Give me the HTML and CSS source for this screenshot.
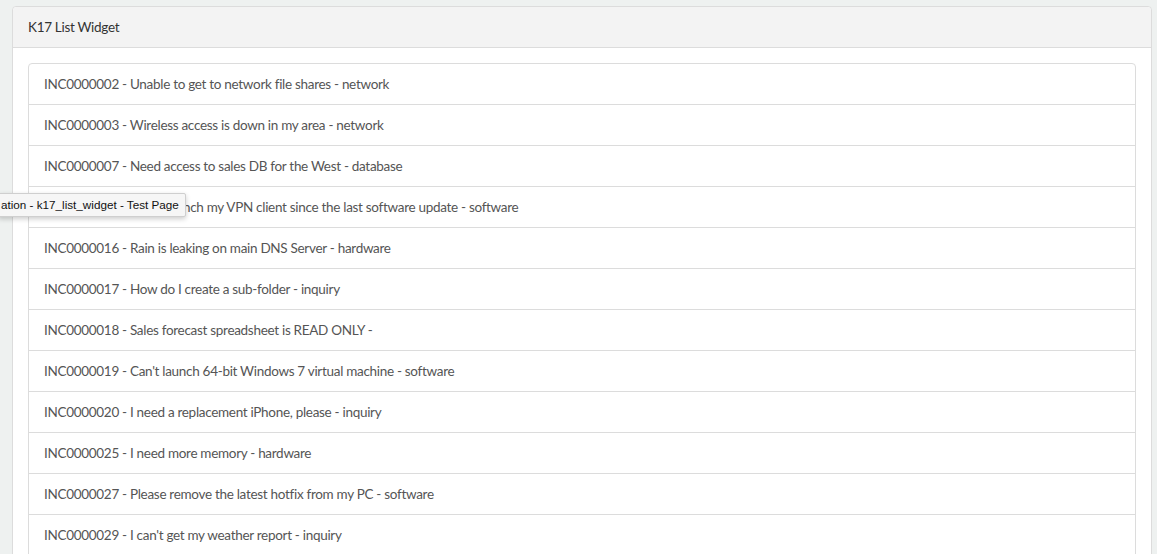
FILE: index.html
```html
<!DOCTYPE html>
<html>
<head>
<meta charset="utf-8">
<title>K17 List Widget</title>
<link rel="stylesheet" href="styles.css">
</head>
<body>
<div class="page">
  <div class="panel">
    <div class="panel-heading">K17 List Widget</div>
    <div class="panel-body">
      <ul class="list-group">
        <li class="list-item">INC0000002 - Unable to get to network file shares - network</li>
        <li class="list-item">INC0000003 - Wireless access is down in my area - network</li>
        <li class="list-item">INC0000007 - Need access to sales DB for the West - database</li>
        <li class="list-item">INC0000015 - I can't launch my VPN client since the last software update - software</li>
        <li class="list-item">INC0000016 - Rain is leaking on main DNS Server - hardware</li>
        <li class="list-item">INC0000017 - How do I create a sub-folder - inquiry</li>
        <li class="list-item">INC0000018 - Sales forecast spreadsheet is READ ONLY - </li>
        <li class="list-item">INC0000019 - Can't launch 64-bit Windows 7 virtual machine - software</li>
        <li class="list-item">INC0000020 - I need a replacement iPhone, please - inquiry</li>
        <li class="list-item">INC0000025 - I need more memory - hardware</li>
        <li class="list-item">INC0000027 - Please remove the latest hotfix from my PC - software</li>
        <li class="list-item">INC0000029 - I can't get my weather report - inquiry</li>
      </ul>
    </div>
  </div>
  <div class="tooltip">ation - k17_list_widget - Test Page</div>
</div>
</body>
</html>
```
FILE: styles.css
```css
html, body {
  margin: 0;
  padding: 0;
  background: #eef1f0;
  overflow: hidden;
  height: 554px;
}
.page {
  padding: 6px 5px 0 12px;
}
.panel {
  background: #fff;
  border: 1px solid #dcdcdc;
  border-radius: 4px;
  font-family: "Lato", "Open Sans", sans-serif;
  font-size: 13.5px;
  letter-spacing: -0.3px;
}
.panel-heading {
  background: #f3f3f3;
  border-bottom: 1px solid #dcdcdc;
  border-radius: 4px 4px 0 0;
  padding: 10px 15px;
  line-height: 20px;
  color: #333;
}
.panel-body {
  padding: 15px;
}
.list-group {
  list-style: none;
  margin: 0;
  padding: 0;
}
.list-item {
  border: 1px solid #dcdcdc;
  margin-bottom: -1px;
  padding: 10px 15px;
  line-height: 20px;
  color: #555;
}
.list-item:first-child {
  border-radius: 4px 4px 0 0;
}
.tooltip {
  position: absolute;
  left: -2px;
  top: 193px;
  padding: 3px 6px 4px 2px;
  background: #f6f6f6;
  border: 1px solid #cfcfcf;
  border-radius: 2px;
  box-shadow: 0 2px 5px rgba(0,0,0,0.2);
  font-family: "Liberation Sans", Arial, sans-serif;
  font-size: 11.7px;
  line-height: 15px;
  color: #111;
  white-space: nowrap;
}
```
